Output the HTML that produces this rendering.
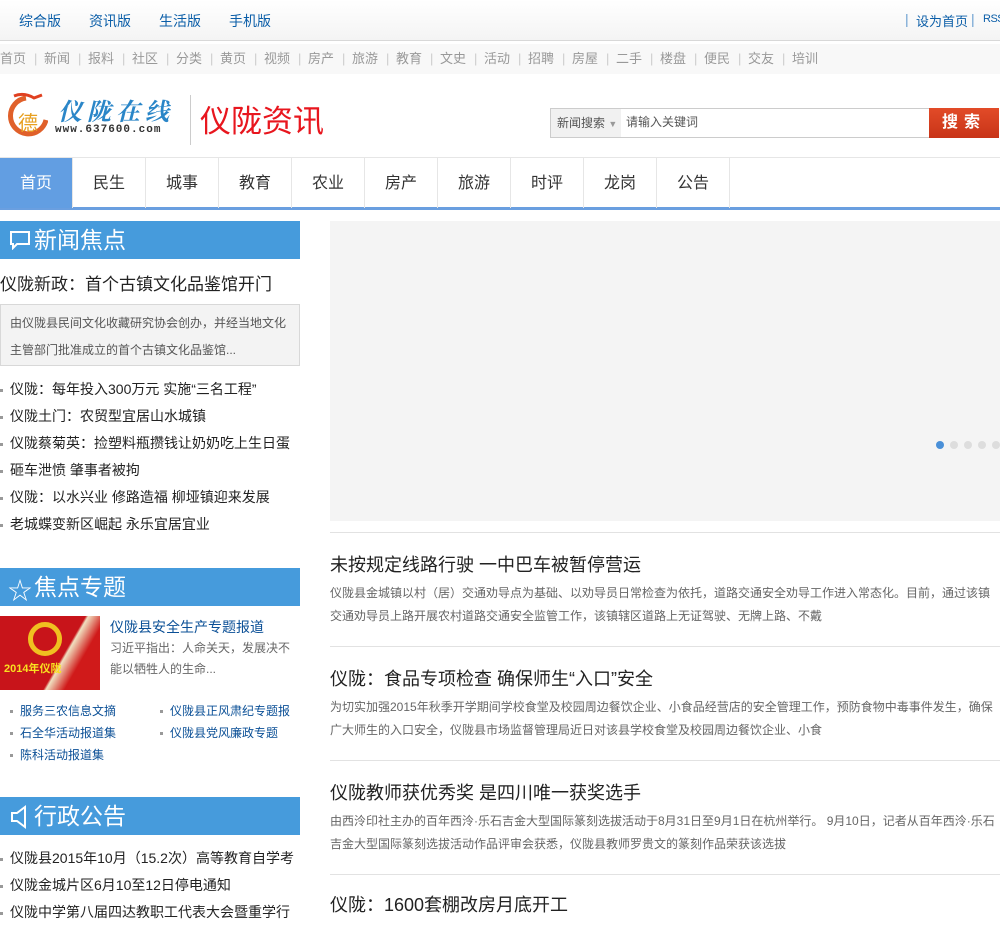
<!DOCTYPE html>
<html><head><meta charset="utf-8"><style>
*{margin:0;padding:0;box-sizing:border-box}
body{width:1000px;height:909px;overflow:hidden;background:#fff;font-family:"Liberation Sans","Noto Sans CJK SC",sans-serif;position:relative}
.a{position:absolute;white-space:nowrap}
#top{left:0;top:0;width:1000px;height:41px;background:linear-gradient(#fff,#f4f4f4);border-bottom:1px solid #d8d8d8}
#top span{position:absolute;top:11px;font-size:14px;color:#0b5ea8}
#sub{left:0;top:44px;width:1000px;height:30px;background:#f8f8f8;font-size:13px;color:#999;line-height:30px}
#sub b{font-weight:normal;position:absolute;top:0}
#nav{left:0;top:157px;width:1000px;height:53px;border-top:1px solid #e6e6e6;border-bottom:3px solid #6a9fe0}
#nav div{float:left;width:73px;height:50px;border-right:1px solid #e6e6e6;text-align:center;line-height:52px;font-size:16px;color:#333}
.hd{left:0;width:300px;height:38px;background:#469bdc;color:#fff;font-size:23px;line-height:38px;padding-left:34px}
.li{font-size:14px;color:#222;line-height:27px}
.li div:before{content:"";display:inline-block;width:3px;height:3px;background:#999;margin-right:7px;vertical-align:middle}
.bl{color:#0a4f96}
.t{font-size:18px;color:#222}
.d{font-size:12px;color:#666;line-height:23px;width:665px;white-space:normal}
.hr{left:330px;width:670px;height:1px;background:#e2e2e2}
</style></head><body>
<div class="a" id="top">
<span style="left:19px">综合版</span><span style="left:89px">资讯版</span><span style="left:159px">生活版</span><span style="left:229px">手机版</span>
<span style="left:905px;color:#6a9fd0">|</span><span style="left:916px;font-size:13px">设为首页</span>
<span style="left:971px;color:#6a9fd0">|</span><span style="left:983px;font-size:11px;letter-spacing:-0.5px;top:13px">RSS</span>
</div>
<div class="a" id="sub">
<b style="left:0">首页</b><b style="left:44px">新闻</b><b style="left:88px">报料</b><b style="left:132px">社区</b><b style="left:176px">分类</b><b style="left:220px">黄页</b><b style="left:264px">视频</b><b style="left:308px">房产</b><b style="left:352px">旅游</b><b style="left:396px">教育</b><b style="left:440px">文史</b><b style="left:484px">活动</b><b style="left:528px">招聘</b><b style="left:572px">房屋</b><b style="left:616px">二手</b><b style="left:660px">楼盘</b><b style="left:704px">便民</b><b style="left:748px">交友</b><b style="left:792px">培训</b>
<b style="left:34px;color:#ccc">|</b><b style="left:78px;color:#ccc">|</b><b style="left:122px;color:#ccc">|</b><b style="left:166px;color:#ccc">|</b><b style="left:210px;color:#ccc">|</b><b style="left:254px;color:#ccc">|</b><b style="left:298px;color:#ccc">|</b><b style="left:342px;color:#ccc">|</b><b style="left:386px;color:#ccc">|</b><b style="left:430px;color:#ccc">|</b><b style="left:474px;color:#ccc">|</b><b style="left:518px;color:#ccc">|</b><b style="left:562px;color:#ccc">|</b><b style="left:606px;color:#ccc">|</b><b style="left:650px;color:#ccc">|</b><b style="left:694px;color:#ccc">|</b><b style="left:738px;color:#ccc">|</b><b style="left:782px;color:#ccc">|</b>
</div>
<!-- logo -->
<svg class="a" style="left:6px;top:92px" width="42" height="48" viewBox="0 0 42 48"><path d="M20 6 A18 18 0 1 0 40 28" fill="none" stroke="#e0602a" stroke-width="5"/><path d="M8 4 q10 -4 20 2 l8 -3" fill="none" stroke="#e04020" stroke-width="3"/><text x="12" y="38" font-size="20" fill="#e8a020" font-family="Noto Sans CJK SC">德</text></svg>
<div class="a" style="left:58px;top:92px;font-size:24px;color:#2a86c8;font-style:italic;font-weight:bold;letter-spacing:5px;font-family:'Noto Serif CJK SC',serif">仪陇在线</div>
<div class="a" style="left:55px;top:124px;font-size:11px;color:#333;letter-spacing:1px;font-family:'Liberation Mono',monospace;font-weight:bold">www.637600.com</div>
<div class="a" style="left:190px;top:95px;width:1px;height:50px;background:#ccc"></div>
<div class="a" style="left:200px;top:102px;font-size:31px;color:#e8161e;line-height:40px">仪陇资讯</div>
<div class="a" style="left:550px;top:108px;width:380px;height:30px;border:1px solid #ccc"></div>
<div class="a" style="left:551px;top:109px;width:70px;height:28px;background:#f1f1f1;font-size:12px;color:#555;line-height:28px;padding-left:6px">新闻搜索 <span style="color:#999;font-size:9px">▼</span></div>
<div class="a" style="left:626px;top:113px;font-size:12px;color:#555">请输入关键词</div>
<div class="a" style="left:929px;top:108px;width:70px;height:30px;background:linear-gradient(#e24b28,#c83418);color:#fff;font-size:16px;font-weight:bold;text-align:center;line-height:30px;letter-spacing:6px">搜索</div>
<div class="a" id="nav"><div style="background:#629ee2;color:#fff">首页</div><div>民生</div><div>城事</div><div>教育</div><div>农业</div><div>房产</div><div>旅游</div><div>时评</div><div>龙岗</div><div>公告</div></div>
<!-- left -->
<div class="a hd" style="top:221px">新闻焦点</div>
<svg class="a" style="left:9px;top:230px" width="22" height="20"><path d="M2 2h18v12H8l-4 4v-4H2z" fill="none" stroke="#fff" stroke-width="2"/></svg>
<div class="a" style="left:0;top:270px;font-size:17px;color:#222">仪陇新政：首个古镇文化品鉴馆开门</div>
<div class="a" style="left:0;top:304px;width:300px;height:62px;background:#f3f3f3;border:1px solid #d8d8d8;font-size:12px;color:#555;line-height:27px;padding:5px 12px 0 9px;white-space:normal">由仪陇县民间文化收藏研究协会创办，并经当地文化主管部门批准成立的首个古镇文化品鉴馆...</div>
<div class="a li" style="left:0;top:376px"><div>仪陇：每年投入300万元 实施“三名工程”</div><div>仪陇土门：农贸型宜居山水城镇</div><div>仪陇蔡菊英：捡塑料瓶攒钱让奶奶吃上生日蛋</div><div>砸车泄愤 肇事者被拘</div><div>仪陇：以水兴业 修路造福 柳垭镇迎来发展</div><div>老城蝶变新区崛起 永乐宜居宜业</div></div>
<div class="a hd" style="top:568px">焦点专题</div>
<div class="a" style="left:8px;top:571px;color:#fff;font-size:24px">☆</div>
<div class="a" style="left:0;top:616px;width:100px;height:74px;background:linear-gradient(120deg,#c8141a 60%,#f0e0c0 62%,#d01a1a 75%)"><div style="position:absolute;left:28px;top:6px;width:34px;height:34px;border-radius:50%;border:5px solid #f0c020"></div><div style="position:absolute;left:4px;top:44px;font-size:11px;font-weight:bold;color:#f8e020">2014年仪陇</div></div>
<div class="a bl" style="left:110px;top:617px;font-size:14px">仪陇县安全生产专题报道</div>
<div class="a" style="left:110px;top:638px;width:190px;font-size:12px;color:#666;line-height:21px;white-space:normal">习近平指出：人命关天，发展决不能以牺牲人的生命...</div>
<div class="a li bl" style="left:10px;top:700px;font-size:12px;line-height:22px"><div>服务三农信息文摘</div><div>石全华活动报道集</div><div>陈科活动报道集</div></div>
<div class="a li bl" style="left:160px;top:700px;font-size:12px;line-height:22px"><div>仪陇县正风肃纪专题报</div><div>仪陇县党风廉政专题</div></div>
<div class="a hd" style="top:797px">行政公告</div>
<svg class="a" style="left:9px;top:805px" width="22" height="24"><path d="M3 8h5l8-6v20l-8-6H3z" fill="none" stroke="#fff" stroke-width="2"/></svg>
<div class="a li" style="left:0;top:845px"><div>仪陇县2015年10月（15.2次）高等教育自学考</div><div>仪陇金城片区6月10至12日停电通知</div><div>仪陇中学第八届四达教职工代表大会暨重学行</div></div>
<!-- right -->
<div class="a" style="left:330px;top:221px;width:670px;height:300px;background:#f4f4f4"></div>
<div class="a" style="left:936px;top:441px;width:8px;height:8px;border-radius:50%;background:#4a90d8"></div>
<div class="a" style="left:950px;top:441px;width:8px;height:8px;border-radius:50%;background:#ddd"></div>
<div class="a" style="left:964px;top:441px;width:8px;height:8px;border-radius:50%;background:#ddd"></div>
<div class="a" style="left:978px;top:441px;width:8px;height:8px;border-radius:50%;background:#ddd"></div>
<div class="a" style="left:992px;top:441px;width:8px;height:8px;border-radius:50%;background:#ddd"></div>
<div class="a hr" style="top:532px"></div>
<div class="a t" style="left:330px;top:551px">未按规定线路行驶 一中巴车被暂停营运</div>
<div class="a d" style="left:330px;top:582px">仪陇县金城镇以村（居）交通劝导点为基础、以劝导员日常检查为依托，道路交通安全劝导工作进入常态化。目前，通过该镇交通劝导员上路开展农村道路交通安全监管工作，该镇辖区道路上无证驾驶、无牌上路、不戴</div>
<div class="a hr" style="top:646px"></div>
<div class="a t" style="left:330px;top:665px">仪陇：食品专项检查 确保师生“入口”安全</div>
<div class="a d" style="left:330px;top:696px">为切实加强2015年秋季开学期间学校食堂及校园周边餐饮企业、小食品经营店的安全管理工作，预防食物中毒事件发生，确保广大师生的入口安全，仪陇县市场监督管理局近日对该县学校食堂及校园周边餐饮企业、小食</div>
<div class="a hr" style="top:760px"></div>
<div class="a t" style="left:330px;top:779px">仪陇教师获优秀奖 是四川唯一获奖选手</div>
<div class="a d" style="left:330px;top:810px">由西泠印社主办的百年西泠·乐石吉金大型国际篆刻选拔活动于8月31日至9月1日在杭州举行。 9月10日，记者从百年西泠·乐石吉金大型国际篆刻选拔活动作品评审会获悉，仪陇县教师罗贵文的篆刻作品荣获该选拔</div>
<div class="a hr" style="top:874px"></div>
<div class="a t" style="left:330px;top:891px">仪陇：1600套棚改房月底开工</div>
</body></html>
